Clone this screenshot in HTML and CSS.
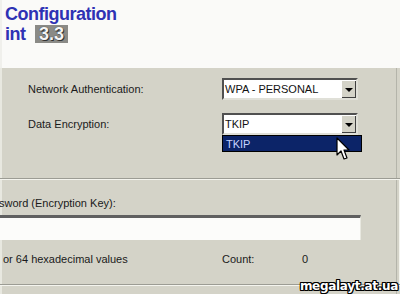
FILE: index.html
```html
<!DOCTYPE html>
<html lang="en">
<head>
  <meta charset="UTF-8">
  <title>Security Configuration</title>
  <link rel="stylesheet" href="styles.css">
</head>
<body>

<div class="screen">
  <div class="header">
    <div class="title">Configuration</div>
    <div class="title">int <span class="badge">3.3</span></div>
  </div>

  <div class="panel">
    <div class="row">
      <span class="label">Network Authentication:</span>
      <div class="select">
        <span class="value">WPA - PERSONAL</span>
        <span class="arrow"></span>
      </div>
    </div>

    <div class="row">
      <span class="label">Data Encryption:</span>
      <div class="select open">
        <span class="value">TKIP</span>
        <span class="arrow"></span>
        <div class="dropdown">TKIP</div>
      </div>
    </div>

    <div class="group">
      <div class="group-label">Password (Encryption Key):</div>
      <div class="textbox"></div>
      <div class="hint">
        <span class="hint-text">or 64 hexadecimal values</span>
        <span class="count">Count:</span>
        <span class="count-num">0</span>
      </div>
    </div>
  </div>

  <svg class="cursor" width="16" height="24" viewBox="0 0 16 24">
    <path d="M1 1 L1 18 L5 14 L8 22 L11 21 L8 13 L13 13 Z" fill="#fff" stroke="#000" stroke-width="1.2" stroke-linejoin="round"/>
  </svg>

  <div class="watermark">megalayt.at.ua</div>
</div>

</body>
</html>
```

FILE: styles.css
```css
body { margin: 0; background: #d4d3c8; font-family: "Liberation Sans", Arial, sans-serif; }
.screen { position: relative; width: 400px; height: 294px; overflow: hidden; background: #d4d3c8; }

.header { height: 68px; background: #fafaf8; padding: 4px 3px 0; box-sizing: border-box; border-left: 2px solid #f0f0ec; }
.title { font-size: 18px; font-weight: bold; line-height: 20px; color: #2e32b4; letter-spacing: -0.5px; }
.badge { display: inline-block; margin-left: 5px; padding: 0 4px; height: 18px; line-height: 18px; background: #8a8a86; color: #f4f4f4; text-shadow: 0 0 1px #222, 1px 1px 0 #333; letter-spacing: 0; }

.panel { height: 226px; padding: 10px 0 0 26px; box-sizing: border-box; border-right: 1px solid #b4b4aa; width: 397px; border-left: 2px solid #e8e8e0; }
.row { display: flex; align-items: center; height: 22px; margin-bottom: 13px; }
.label { width: 194px; font-size: 11px; color: #1a1a1a; }

.select { position: relative; width: 136px; height: 22px; box-sizing: border-box; background: #fff; border-top: 2px solid #505050; border-left: 2px solid #505050; border-right: 2px solid #e0e0d8; border-bottom: 2px solid #e0e0d8; display: flex; align-items: center; }
.value { flex: 1; font-size: 11px; padding-left: 1px; color: #111; }
.arrow { width: 14px; height: 17px; background: #d4d3c8; border-right: 1px solid #404040; border-bottom: 1px solid #404040; box-sizing: border-box; position: relative; }
.arrow::after { content: ""; position: absolute; left: 3px; top: 7px; border-left: 4px solid transparent; border-right: 4px solid transparent; border-top: 4px solid #000; }

.dropdown { position: absolute; left: -2px; top: 20px; width: 140px; height: 17px; box-sizing: border-box; background: #0c2468; color: #c8d4ff; font-size: 11px; padding: 2px 0 0 3px; border: 1px solid #000; }

.group { margin: 43px 0 0 -38px; width: 411px; height: 107px; box-sizing: border-box; border-top: 1px solid #9c9c94; border-right: 1px solid #9c9c94; border-bottom: 1px solid #9c9c94; box-shadow: inset -1px 1px 0 #f4f4ee, 0 1px 0 #f4f4ee; padding: 18px 0 0 10px; }
.group-label { font-size: 11px; margin-left: -20px; color: #1a1a1a; }
.textbox { margin: 6px 0 0 -10px; width: 371px; height: 25px; box-sizing: border-box; background: #fcfcfa; border-top: 3px solid #606060; border-left: 1px solid #808080; border-right: 1px solid #e8e8e0; }
.hint { display: flex; margin-top: 13px; font-size: 11px; color: #1a1a1a; padding-left: 3px; }
.hint-text { width: 219px; }
.count { width: 80px; }

.cursor { position: absolute; left: 336px; top: 137px; }
.watermark { position: absolute; right: 2px; bottom: 1px; font-family: "DejaVu Sans", sans-serif; font-weight: bold; font-size: 12px; color: #fff; letter-spacing: -0.3px; text-shadow: 1px 0 0 #000, -1px 0 0 #000, 0 1px 0 #000, 0 -1px 0 #000, 1px 1px 0 #000, -1px -1px 0 #000, 1px -1px 0 #000, -1px 1px 0 #000; }
```
